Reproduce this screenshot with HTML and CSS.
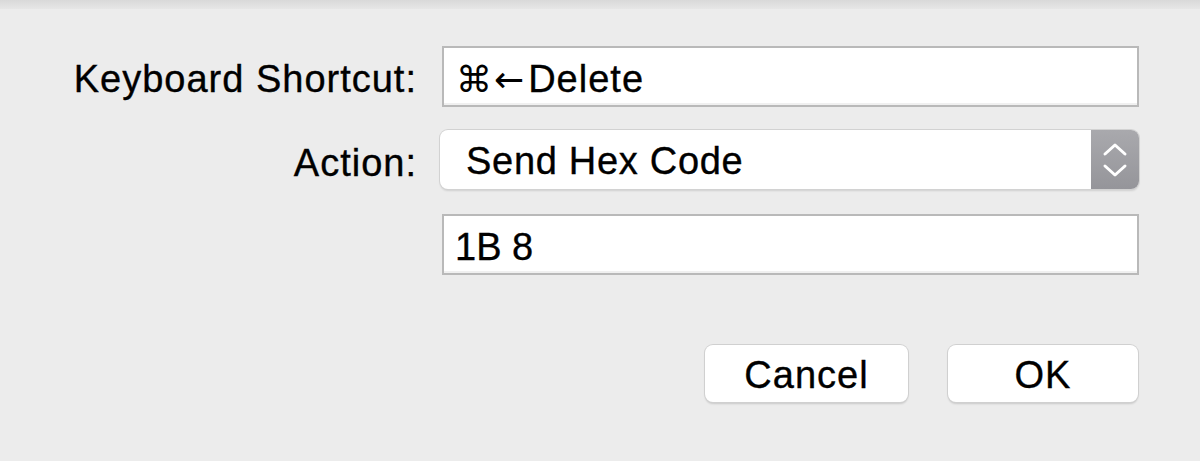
FILE: index.html
```html
<!DOCTYPE html>
<html>
<head>
<meta charset="utf-8">
<link rel="stylesheet" href="styles.css">
</head>
<body>
<div class="topbar"></div>
<div class="dialog">
  <div class="form">
    <div class="label">Keyboard Shortcut:</div>
    <div class="field"><span class="sym">⌘←</span>Delete</div>
    <div class="label">Action:</div>
    <div class="popup">
      <div class="popup-text">Send Hex Code</div>
      <div class="stepper">
        <svg width="26" height="38" viewBox="0 0 26 38">
          <path d="M3 13 L13 4 L23 13" fill="none" stroke="#fff" stroke-width="3" stroke-linecap="round" stroke-linejoin="round"/>
          <path d="M3 25 L13 34 L23 25" fill="none" stroke="#fff" stroke-width="3" stroke-linecap="round" stroke-linejoin="round"/>
        </svg>
      </div>
    </div>
    <div></div>
    <div class="field field2">1B 8</div>
  </div>
  <div class="buttons">
    <div class="btn cancel">Cancel</div>
    <div class="btn ok">OK</div>
  </div>
</div>
</body>
</html>
```
FILE: styles.css
```css
html, body {
  margin: 0;
  padding: 0;
}
body {
  width: 1200px;
  height: 461px;
  background: #ececec;
  font-family: "Liberation Sans", Arial, sans-serif;
  color: #000;
  overflow: hidden;
}
.topbar {
  height: 9px;
  background: linear-gradient(#d9d9d9, #e6e6e6);
}
.dialog {
  padding-top: 37px;
}
.form {
  display: grid;
  grid-template-columns: 417px 697px;
  column-gap: 25px;
  align-items: center;
}
.label,
.field,
.popup-text,
.btn {
  font-size: 38px;
  letter-spacing: 1px;
  -webkit-text-stroke: 0.35px #000;
}
.label {
  text-align: right;
  padding-top: 6px;
}
.field {
  box-sizing: border-box;
  height: 61px;
  border: 2px solid #b9b9b9;
  background: #fff;
  box-shadow: inset 0 -2px 0 #f0f0f0;
  line-height: 57px;
  padding-top: 6px;
  padding-left: 12px;
  display: flex;
  align-items: center;
}
.field2 {
  letter-spacing: 0;
  padding-left: 11px;
}
.sym {
  font-family: "DejaVu Sans", sans-serif;
  font-size: 36px;
  letter-spacing: 2px;
  margin-right: 2px;
  -webkit-text-stroke: 0;
}
.popup {
  margin-top: 23px;
  margin-bottom: 25px;
  margin-left: -2px;
  width: 699px;
  height: 59px;
  box-sizing: border-box;
  display: flex;
  border-radius: 8px;
  background: #fff;
  box-shadow: 0 0 0 1px #d2d2d2, 0 2px 2px rgba(0,0,0,0.12);
  overflow: hidden;
}
.popup-text {
  flex: 1;
  line-height: 59px;
  padding-top: 2px;
  padding-left: 26px;
  letter-spacing: 0.7px;
}
.stepper {
  width: 48px;
  background: linear-gradient(#a9a9ad, #95959a);
  display: flex;
  align-items: center;
  justify-content: center;
}
.buttons {
  display: flex;
  gap: 40px;
  padding-left: 705px;
  margin-top: 70px;
}
.btn {
  height: 57px;
  box-sizing: border-box;
  background: #fff;
  border-radius: 8px;
  box-shadow: 0 0 0 1px #d0d0d0, 0 2px 2px rgba(0,0,0,0.15);
  line-height: 57px;
  padding-top: 2px;
  text-align: center;
}
.cancel { width: 203px; }
.ok { width: 190px; }
```
